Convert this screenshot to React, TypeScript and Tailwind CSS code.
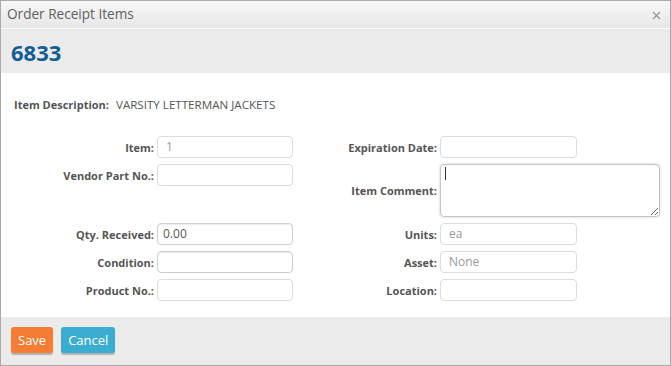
import React from "react";

const font = { fontFamily: '"Open Sans", "Liberation Sans", sans-serif' };

function Label({ children, top }: { children: React.ReactNode; top?: boolean }) {
  return (
    <div
      className={`flex justify-end text-[11px] font-bold text-[#555] leading-none ${
        top ? "items-start pt-[6px]" : "items-center"
      }`}
    >
      {children}
    </div>
  );
}

function Field({ value, muted, dark }: { value?: string; muted?: boolean; dark?: boolean }) {
  return (
    <div
      className={`h-[22px] rounded-[4px] border bg-white flex items-center text-[12px] leading-none ${
        dark ? "border-[#cfcfcf] shadow-[inset_0_1px_1px_rgba(0,0,0,0.08)]" : "border-[#dcdcdc]"
      } ${muted ? "text-[#999] pl-[8px]" : "text-[#555] pl-[5px]"}`}
    >
      {value}
    </div>
  );
}

export default function App() {
  return (
    <div style={font} className="w-[671px] h-[366px] border border-[#aaa] flex flex-col bg-white">
      <div className="h-[27px] shrink-0 bg-gradient-to-b from-[#f7f7f7] to-[#e7e7e7] flex items-center justify-between pl-[6px] pr-[9px]">
        <span className="text-[13.6px] text-[#5f5f5f]">Order Receipt Items</span>
        <svg width="9" height="9" viewBox="0 0 9 9" className="mt-[1px]">
          <path d="M1 1L8 8M8 1L1 8" stroke="#9a9a9a" strokeWidth="1.4" />
        </svg>
      </div>
      <div className="h-[1px] shrink-0 bg-white" />
      <div className="h-[44px] shrink-0 bg-[#ebebeb] flex items-center pl-[10px]">
        <span className="text-[22px] font-bold text-[#135d94] leading-none mt-[2px]">6833</span>
      </div>
      <div className="flex-1 bg-white">
        <div className="flex items-center h-[20px] mt-[22px] pl-[13px] text-[#555]">
          <span className="font-bold text-[11px]">Item Description:</span>
          <span className="ml-[7px] text-[11.6px]">VARSITY LETTERMAN JACKETS</span>
        </div>
        <div className="grid grid-cols-[153px_136px_141px_220px] gap-x-[3px] gap-y-[6px] mt-[21px]">
          <Label>Item:</Label>
          <Field value="1" muted />
          <Label>Expiration Date:</Label>
          <div className="w-[137px]">
            <Field />
          </div>

          <Label top>Vendor Part No.:</Label>
          <div>
            <Field />
          </div>
          <Label>Item Comment:</Label>
          <div className="relative">
            <textarea className="block w-[220px] h-[53px] rounded-[4px] border border-[#c4c4c4] shadow-[0_0_3px_rgba(0,0,0,0.2)] outline-none" />
            <div className="absolute left-[5px] top-[3px] w-[1px] h-[13px] bg-[#333]" />
          </div>

          <Label>Qty. Received:</Label>
          <Field value="0.00" dark />
          <Label>Units:</Label>
          <div className="w-[137px]">
            <Field value="ea" muted />
          </div>

          <Label>Condition:</Label>
          <Field dark />
          <Label>Asset:</Label>
          <div className="w-[137px]">
            <Field value="None" muted />
          </div>

          <Label>Product No.:</Label>
          <Field />
          <Label>Location:</Label>
          <div className="w-[137px]">
            <Field />
          </div>
        </div>
      </div>
      <div className="h-[48px] shrink-0 bg-[#ebebeb] flex items-start gap-[8px] pl-[10px] pt-[10px]">
        <button className="h-[26px] px-[7px] rounded-[3px] bg-[#f47c34] text-white text-[13px] shadow-[0_2px_1px_rgba(0,0,0,0.25)] leading-none">
          Save
        </button>
        <button className="h-[26px] px-[7px] rounded-[3px] bg-[#3badd0] text-white text-[13px] shadow-[0_2px_1px_rgba(0,0,0,0.25)] leading-none">
          Cancel
        </button>
      </div>
    </div>
  );
}
